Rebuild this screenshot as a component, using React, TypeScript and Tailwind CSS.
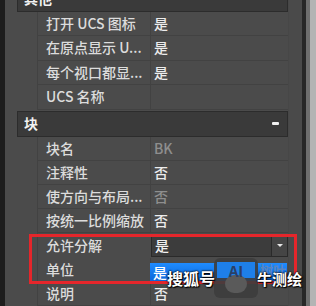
import React from "react";

type Row = { label: string; value?: string; dim?: boolean };

const topRows: Row[] = [
  { label: "打开 UCS 图标", value: "是" },
  { label: "在原点显示 U...", value: "是" },
  { label: "每个视口都显...", value: "是" },
  { label: "UCS 名称", value: "" },
];

const blockRows: Row[] = [
  { label: "块名", value: "BK", dim: true },
  { label: "注释性", value: "否" },
  { label: "使方向与布局...", value: "否", dim: true },
  { label: "按统一比例缩放", value: "否" },
];

const font = { fontFamily: '"Noto Sans CJK SC", "Noto Sans", sans-serif' };
const outline = { textShadow: "0 0 2px #000, 0 0 2px #000, 1px 1px 1px #000" };

const SectionHeader = ({ title, className }: { title: string; className: string }) => (
  <div
    className={`flex items-center justify-between h-[27px] bg-[#3a3a3a] border border-[#2c2c2c] pl-[6px] pr-[8px] ${className}`}
  >
    <span className="text-[14px] font-bold text-[#f2f2f2]">{title}</span>
    <span className="w-[7px] h-[3px] bg-[#f0f0f0] rounded-[1px]" />
  </div>
);

const PropRow = ({ row, h }: { row: Row; h: string }) => (
  <div className={`flex ${h}`}>
    <div className="w-[20px] shrink-0" />
    <div className="flex flex-1 border-b border-l border-[#424242]">
      <div className="w-[113px] shrink-0 flex items-center pl-[8px] border-r border-[#424242] text-[14px] font-medium text-[#dcdcdc] whitespace-nowrap overflow-hidden">
        {row.label}
      </div>
      <div
        className={`flex-1 flex items-center pl-[3px] text-[14px] font-medium ${
          row.dim ? "text-[#8e8e8e]" : "text-[#ececec]"
        }`}
      >
        {row.value}
      </div>
    </div>
  </div>
);

export default function App() {
  return (
    <div className="relative w-[316px] h-[306px] overflow-hidden flex bg-[#4b4b4b]" style={font}>
      <div className="w-[5px] shrink-0 bg-[#1d1d1d]" />
      <div className="w-[283px] shrink-0 flex flex-col pl-[12px]">
        <SectionHeader title="其他" className="mt-[-15px]" />
        {topRows.map((r) => (
          <PropRow key={r.label} row={r} h="h-[25px]" />
        ))}
        <SectionHeader title="块" className="mt-[1px]" />
        {blockRows.map((r) => (
          <PropRow key={r.label} row={r} h="h-[24.5px]" />
        ))}
        {/* 允许分解 with open combo */}
        <div className="flex h-[24.5px]">
          <div className="w-[20px] shrink-0" />
          <div className="flex flex-1 border-l border-[#424242]">
            <div className="w-[113px] shrink-0 flex items-center pl-[8px] text-[14px] font-medium text-[#dcdcdc]">
              允许分解
            </div>
            <div className="flex-1 flex items-stretch bg-[#3c3c3c] border border-[#2a2a2a] my-[1px]">
              <div className="flex-1 flex items-center pl-[3px] text-[14px] font-medium text-[#f0f0f0]">是</div>
              <div className="w-[16px] flex items-center justify-center border-l border-[#2a2a2a] bg-[#454545]">
                <span className="w-0 h-0 border-l-[3px] border-r-[3px] border-t-[3px] border-l-transparent border-r-transparent border-t-[#e8e8e8]" />
              </div>
            </div>
          </div>
        </div>
        <PropRow row={{ label: "单位", value: "" }} h="h-[24.5px]" />
        <PropRow row={{ label: "说明", value: "否" }} h="h-[24.5px]" />
      </div>
      <div className="w-[14px] shrink-0 border-l border-[#474747] bg-[#4a4a4a]" />
      <div className="w-[4px] shrink-0 bg-[#272727]" />
      <div className="flex-1 flex">
        <div className="w-[4px] bg-[#6e6e6e]" />
        <div className="flex-1 bg-[#b4b4b4]" />
      </div>

      {/* dropdown list item */}
      <div className="absolute left-[150px] top-[263px] w-[137px] h-[19px] flex items-center pl-[3px] bg-gradient-to-b from-[#1f8cff] to-[#0a64d8] text-[14px] font-medium text-white">
        是
      </div>

      {/* red highlight box */}
      <div className="absolute left-[29px] top-[234px] w-[268px] h-[50px] border-[3px] border-[#e5262b]" />

      {/* watermark */}
      <div className="absolute left-[214px] top-[258px] w-[44px] h-[40px] rounded-[6px] bg-[#3d3d3d]/90 overflow-hidden">
        <div className="mx-[3px] mt-[4px] h-[16px] bg-[#1e7fe8] flex items-center justify-center text-[15px] font-bold text-[#2a3f66] leading-none">
          AI
        </div>
        <div className="mx-auto mt-[-3px] w-[22px] h-[18px] rounded-full bg-[#5a5a5a]" />
      </div>
      <div className="absolute left-[260px] top-[263px] text-[13px] font-bold text-[#5a85bf] leading-none">
        树叶
      </div>
      <div className="absolute left-[167px] top-[268px] text-[16px] font-bold text-white leading-[20px]" style={outline}>
        搜狐号
      </div>
      <div className="absolute left-[257px] top-[269px] text-[15px] font-bold text-white leading-[20px]" style={outline}>
        牛测绘
      </div>
    </div>
  );
}
